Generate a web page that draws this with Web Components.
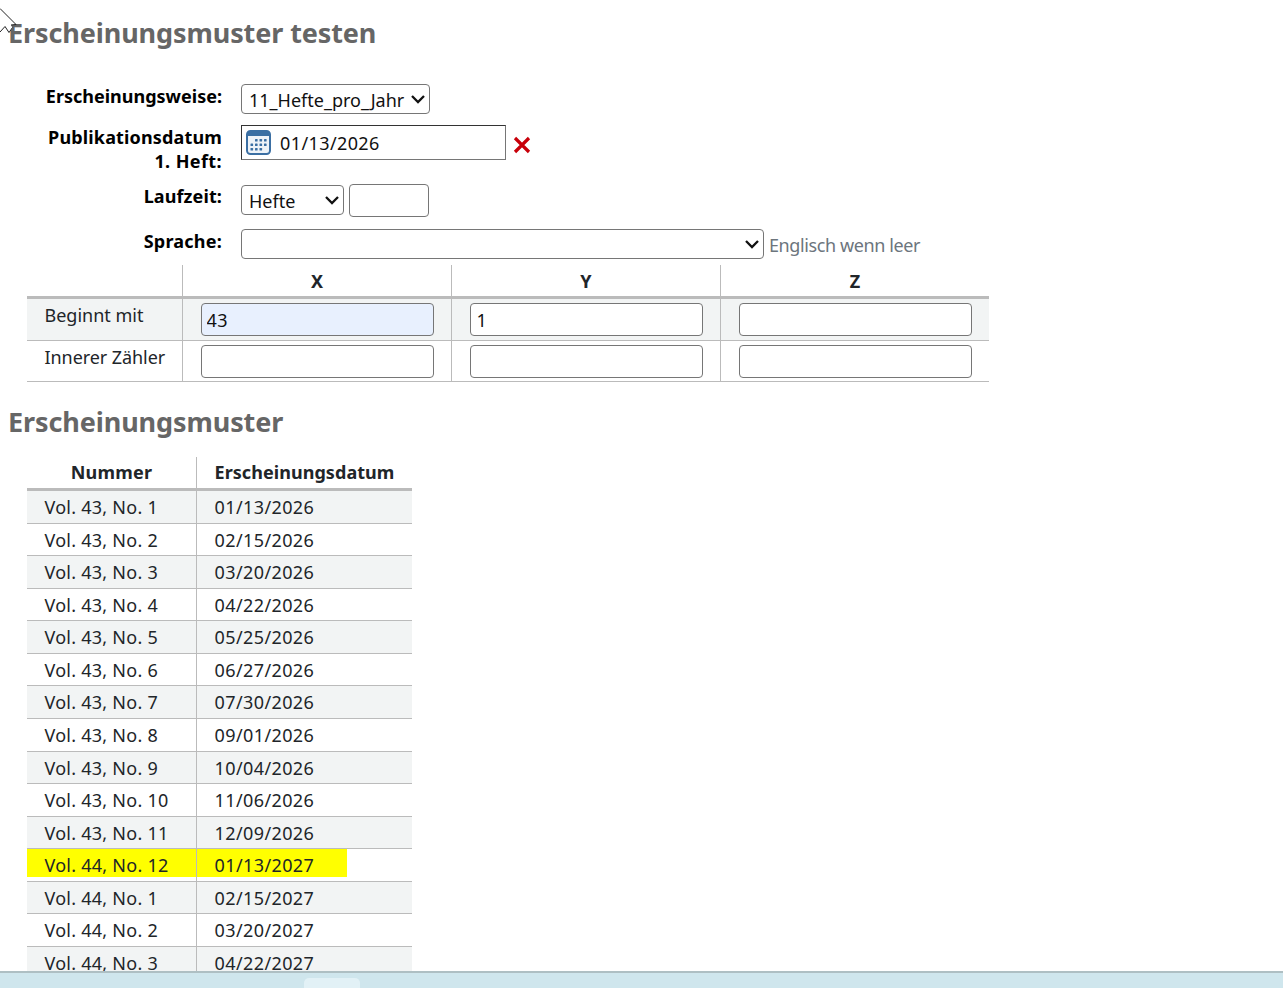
<!doctype html>
<html lang="de"><head><meta charset="utf-8"><title>Erscheinungsmuster testen</title>
<style>
html,body{margin:0;height:100%;overflow:hidden;background:#fff}
body{font-family:"Noto Sans","Open Sans",sans-serif;font-size:18px;color:#212529;display:flex;flex-direction:column;height:988px}
</style></head><body>
<pm-page></pm-page>
<pm-footer></pm-footer>
<script>
const def=(n,css,html,init)=>customElements.define(n,class extends HTMLElement{
  constructor(){super();this.attachShadow({mode:'open'}).innerHTML=`<style>${css}</style>${html}`;}
  connectedCallback(){init&&init.call(this,this.shadowRoot)}
});
def('pm-heading',`:host{display:block;padding:var(--top,0) 0 0 8px;}
 h2{margin:0;font:700 27px/36px "Noto Sans",sans-serif;color:#666;letter-spacing:-.1px}`,`<h2><slot></slot></h2>`);
def('pm-select',`:host{display:inline-block;position:relative;line-height:0}
 select{appearance:none;-webkit-appearance:none;display:block;box-sizing:border-box;width:var(--w);height:30px;font:18px "Noto Sans",sans-serif;color:#111;background:#fff;border:1px solid #767676;border-radius:4px;padding:2px 0 0 7px;margin:0}
 svg{position:absolute;right:4px;top:10px;pointer-events:none}`,
 `<select></select><svg width="16" height="10" viewBox="0 0 16 10"><path d="M2 2l6 6 6-6" fill="none" stroke="#111" stroke-width="2.3"/></svg>`,function(r){const s=r.querySelector('select');const o=document.createElement('option');o.textContent=this.getAttribute('value')||'';s.append(o);});
def('pm-input',`:host{display:block}
 input{display:block;box-sizing:border-box;width:var(--w,233px);height:var(--h,33px);font:18px "Noto Sans",sans-serif;letter-spacing:.4px;color:#111;background:var(--bg,#fff);border:1px solid #767676;border-radius:4px;padding:1px 5px 0 var(--pl,5px);margin:0}`,
 `<input type="text">`,function(r){r.querySelector('input').value=this.getAttribute('value')||''});
def('pm-date',`:host{display:flex;align-items:center;gap:7px}
 .box{box-sizing:border-box;width:265px;height:35px;border:1px solid #767676;border-top-color:#333;border-left-color:#333;display:flex;align-items:center;gap:9px;padding-left:4px;font-size:18px;letter-spacing:.4px;color:#111}
 svg{display:block}
 .x{margin-top:4px}`,
 `<div class="box"><svg width="25" height="25" viewBox="0 0 25 25"><rect x="1" y="1" width="23" height="23" rx="3.500" fill="#eef3f8" stroke="#3b6fa3" stroke-width="2"/><path d="M1 4.500A3.500 3.500 0 0 1 4.500 1h16A3.500 3.500 0 0 1 24 4.500V6H1z" fill="#3b6fa3"/><g fill="#3b6fa3"><rect x="9" y="9" width="2.600" height="2.600" rx=".6"/><rect x="13.500" y="9" width="2.600" height="2.600" rx=".6"/><rect x="18" y="9" width="2.600" height="2.600" rx=".6"/><rect x="4.500" y="13.500" width="2.600" height="2.600" rx=".6"/><rect x="9" y="13.500" width="2.600" height="2.600" rx=".6"/><rect x="13.500" y="13.500" width="2.600" height="2.600" rx=".6"/><rect x="18" y="13.500" width="2.600" height="2.600" rx=".6"/><rect x="4.500" y="18" width="2.600" height="2.600" rx=".6"/><rect x="9" y="18" width="2.600" height="2.600" rx=".6"/><rect x="13.500" y="18" width="2.600" height="2.600" rx=".6"/></g></svg><span><slot></slot></span></div>
 <svg class="x" width="18" height="18" viewBox="0 0 18 18"><path d="M2 2l14 14M16 2L2 16" stroke="#c8000a" stroke-width="3.2" fill="none"/></svg>`);
def('pm-form',`:host{display:grid;grid-template-columns:222px 1fr;column-gap:19px;padding-top:33px}`,`<slot></slot>`);
def('pm-label',`:host{display:block;text-align:right;font-weight:700;font-size:18px;line-height:24px;letter-spacing:var(--ls,.1px);color:#000;margin-top:var(--mt,0)}`,`<slot></slot>`);
def('pm-ctl',`:host{display:flex;align-items:flex-start;gap:5px;margin-top:var(--mt,0)}
 ::slotted(.hint){color:#6c757d;font-size:18px;line-height:30px;margin-top:1px;letter-spacing:-.4px}`,`<slot></slot>`);
def('pm-table',`:host{display:block;margin-left:27px;width:var(--tw);}`,`<slot></slot>`);
def('pm-tr',`:host{display:grid;grid-template-columns:var(--cols);box-sizing:border-box;height:var(--rh);border-bottom:1px solid #bbb}
 :host([head]){height:var(--hh);border-bottom:3px solid #bbb;font-weight:700;color:#212529;text-align:center}
 :host([odd]){background:#f2f4f4}`,`<slot></slot>`);
def('pm-td',`:host{display:block;box-sizing:border-box;border-left:1px solid #bbb;padding:var(--pt,0) 17.5px 0;line-height:var(--lh,24px);white-space:nowrap;min-width:0;position:relative}
 :host(:first-child){border-left:0}
 :host([mark]) .m{background:#ff0;position:absolute;left:0;top:0;height:28px;width:var(--mw);z-index:0}
 span{position:relative;z-index:1}`,`<div class="m"></div><span><slot></slot></span>`);
def('pm-footer',`:host{display:block;flex:0 0 17px;box-sizing:border-box;border-top:2px solid #aebfc3;background:#cfe6ed;padding:5px 0 0 304px;overflow:hidden}
 div{width:56px;height:14px;background:#e2f1f6;border-radius:5px 5px 0 0}`,`<div></div>`);
def('pm-cursor',`:host{position:absolute;left:0;top:0;display:block;line-height:0;z-index:2}`,
 `<svg width="24" height="36" viewBox="0 0 24 36"><path d="M0 8.500L16 24.500 11 25 12.500 28 9 33 5 26.500 0 32z" fill="#fff"/><path d="M0 8.500L16 24.500 11 25M0 32l5-5.500 4 6 3.500-5" fill="none" stroke="#222" stroke-width="1"/></svg>`);
def('pm-page',`:host{display:block;flex:1 1 auto;min-height:0;overflow:hidden;position:relative;--top:15px}`,`<slot></slot>`);

document.querySelector('pm-page').innerHTML=`
<pm-heading>Erscheinungsmuster testen</pm-heading>
<pm-cursor></pm-cursor>
<pm-form>
  <pm-label style="--ls:0">Erscheinungsweise:</pm-label>
  <pm-ctl><pm-select value="11_Hefte_pro_Jahr" style="--w:189px"></pm-select></pm-ctl>
  <pm-label style="--mt:11px;--ls:.15px">Publikationsdatum<br><span style="letter-spacing:.4px">1. Heft:</span></pm-label>
  <pm-ctl style="--mt:11px"><pm-date>01/13/2026</pm-date></pm-ctl>
  <pm-label style="--mt:11px">Laufzeit:</pm-label>
  <pm-ctl style="--mt:11px"><pm-select value="Hefte" style="--w:103px;margin-top:1px"></pm-select><pm-input style="--w:80px"></pm-input></pm-ctl>
  <pm-label style="--mt:12px;--ls:.22px">Sprache:</pm-label>
  <pm-ctl style="--mt:12px"><pm-select value="" style="--w:523px;"></pm-select><span class="hint">Englisch wenn leer</span></pm-ctl>
</pm-form>
<pm-table style="--tw:962px;--cols:155px 269px 269px 269px;--rh:42px;--hh:34px;margin-top:5px">
  <pm-tr head><pm-td style="--pt:4px"></pm-td><pm-td style="--pt:4px">X</pm-td><pm-td style="--pt:4px">Y</pm-td><pm-td style="--pt:4px">Z</pm-td></pm-tr>
  <pm-tr odd><pm-td style="--pt:4px">Beginnt mit</pm-td><pm-td style="--pt:4px"><pm-input value="43" style="--bg:#e8f0fe"></pm-input></pm-td><pm-td style="--pt:4px"><pm-input value="1" style="--pl:6px"></pm-input></pm-td><pm-td style="--pt:4px"><pm-input></pm-input></pm-td></pm-tr>
  <pm-tr style="--rh:41px"><pm-td style="--pt:4px;letter-spacing:-.07px">Innerer Zähler</pm-td><pm-td style="--pt:4px"><pm-input></pm-input></pm-td><pm-td style="--pt:4px"><pm-input></pm-input></pm-td><pm-td style="--pt:4px"><pm-input></pm-input></pm-td></pm-tr>
</pm-table>
<pm-heading style="--top:22px">Erscheinungsmuster</pm-heading>
<pm-table id="t" style="--tw:385px;--cols:169px 216px;--rh:32.56px;--hh:34.2px;--pt:4px;margin-top:17px"></pm-table>`;
const rows=[['Vol. 43, No. 1','01/13/2026'],['Vol. 43, No. 2','02/15/2026'],['Vol. 43, No. 3','03/20/2026'],['Vol. 43, No. 4','04/22/2026'],['Vol. 43, No. 5','05/25/2026'],['Vol. 43, No. 6','06/27/2026'],['Vol. 43, No. 7','07/30/2026'],['Vol. 43, No. 8','09/01/2026'],['Vol. 43, No. 9','10/04/2026'],['Vol. 43, No. 10','11/06/2026'],['Vol. 43, No. 11','12/09/2026'],['Vol. 44, No. 12','01/13/2027'],['Vol. 44, No. 1','02/15/2027'],['Vol. 44, No. 2','03/20/2027'],['Vol. 44, No. 3','04/22/2027']];
document.getElementById('t').innerHTML=`<pm-tr head><pm-td style="--pt:3px;letter-spacing:.25px">Nummer</pm-td><pm-td style="--pt:3px;letter-spacing:.05px">Erscheinungsdatum</pm-td></pm-tr>`+rows.map((r,i)=>{const m=i==11;return `<pm-tr ${i%2==0?'odd':''}><pm-td ${m?'mark':''} style="letter-spacing:.25px;--mw:169px">${r[0]}</pm-td><pm-td ${m?'mark':''} style="letter-spacing:.4px;--mw:150px">${r[1]}</pm-td></pm-tr>`}).join('');
</script>
</body></html>
